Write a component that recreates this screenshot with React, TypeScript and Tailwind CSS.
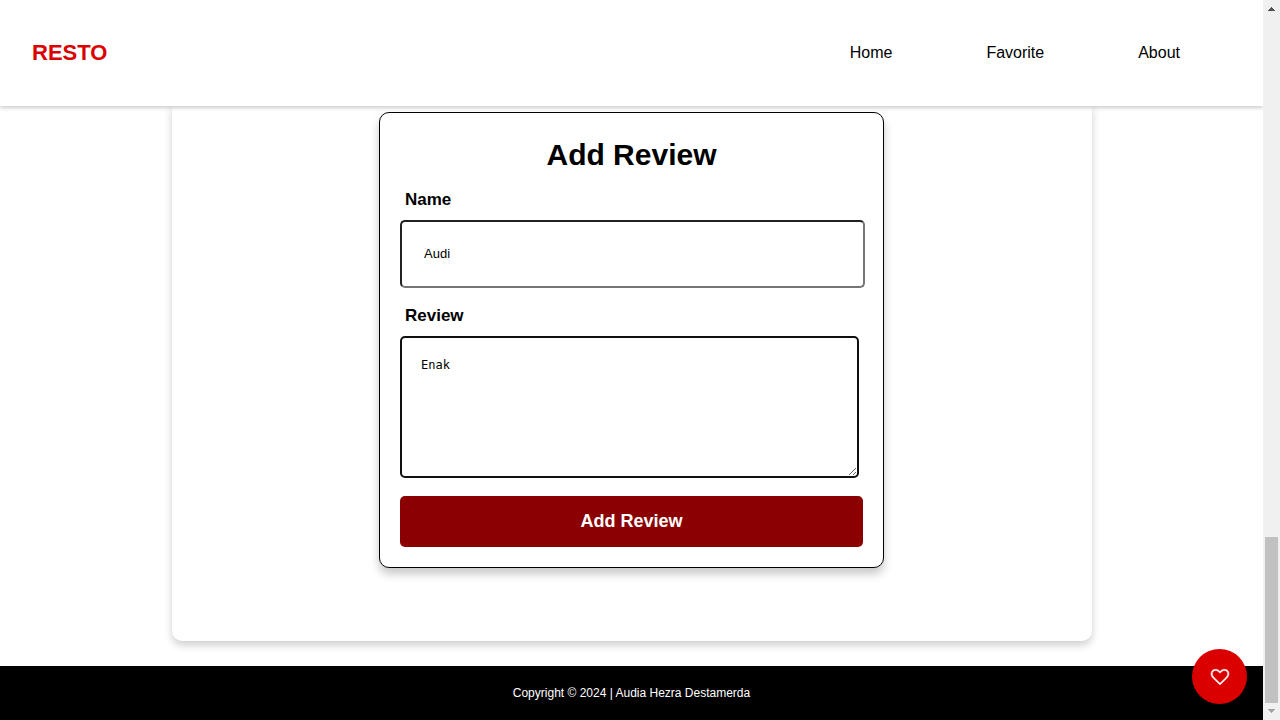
import { useState } from "react";

const links = ["Home", "Favorite", "About"];

function Header() {
  return (
    <header className="relative z-10 flex h-[106px] shrink-0 items-center justify-between bg-white pr-[83px] pl-8 shadow-[0_2px_4px_rgba(0,0,0,0.2)]">
      <h1 className="text-[22px] leading-8 font-bold text-[#db0000]">RESTO</h1>
      <nav>
        <ul className="flex gap-[94px]">
          {links.map((label) => (
            <li key={label}>
              <a href="#" className="text-base leading-6 text-black">
                {label}
              </a>
            </li>
          ))}
        </ul>
      </nav>
    </header>
  );
}

function ReviewForm() {
  const [name, setName] = useState("Audi");
  const [review, setReview] = useState("Enak");
  return (
    <form
      onSubmit={(e) => e.preventDefault()}
      className="flex w-full max-w-[505px] flex-col rounded-[10px] border border-black bg-white p-5 shadow-[0_6px_10px_rgba(0,0,0,0.22)]"
    >
      <h2 className="text-center text-[30px] leading-[44px] font-bold">Add Review</h2>
      <label htmlFor="name" className="mt-[11px] pl-[5px] text-[17px] leading-6 font-bold">
        Name
      </label>
      <input
        id="name"
        type="text"
        value={name}
        onChange={(e) => setName(e.target.value)}
        className="mt-2 -mr-0.5 h-[68px] rounded-[5px] border-2 border-t-[#212121] border-r-[#767676] border-b-[#767676] border-l-[#212121] bg-white px-[22px] pb-0.5 text-[13px] text-black outline-none"
      />
      <label htmlFor="review" className="mt-4 pl-[5px] text-[17px] leading-6 font-bold">
        Review
      </label>
      <textarea
        id="review"
        value={review}
        onChange={(e) => setReview(e.target.value)}
        className="mt-2 mr-1 h-[142px] resize rounded-[5px] border-2 border-[#101010] bg-white px-[19px] py-[19px] font-['DejaVu_Sans_Mono',monospace] text-xs leading-4 text-black outline-none"
      />
      <button
        type="submit"
        className="mt-[18px] h-[51px] rounded-[5px] bg-[#8b0000] text-[18px] font-bold text-white"
      >
        Add Review
      </button>
    </form>
  );
}

function ScrollTrack() {
  return (
    <div
      aria-hidden="true"
      className="relative z-20 flex w-[17px] shrink-0 flex-col items-center bg-[#f0f0f0]"
    >
      <svg viewBox="0 0 17 17" className="size-[17px]" shapeRendering="crispEdges">
        <path d="M8 7h1v1h1v1h1v1h1v1H5v-1h1V9h1V8h1z" fill="#505050" />
      </svg>
      <div className="grow" />
      <div className="h-[166px] w-[13px] bg-[#c1c1c1]" />
      <svg viewBox="0 0 17 17" className="size-[17px]" shapeRendering="crispEdges">
        <path d="M5 6h7v1h-1v1h-1v1H9v1H8V9H7V8H6V7H5z" fill="#a3a3a3" />
      </svg>
    </div>
  );
}

export default function App() {
  return (
    <div className="flex min-h-screen bg-white font-['Liberation_Sans',Arial,sans-serif] text-black">
      <div className="relative flex min-w-0 grow flex-col">
        <Header />
        <main className="flex grow justify-center pb-[25px]">
          <section className="flex w-full max-w-[920px] items-start justify-center rounded-b-[10px] bg-white pt-1.5 pb-[73px] shadow-[0_4px_8px_rgba(0,0,0,0.2)]">
            <ReviewForm />
          </section>
        </main>
        <footer className="flex h-[54px] shrink-0 items-center justify-center bg-black text-xs text-white">
          <p>Copyright © 2024 | Audia Hezra Destamerda</p>
        </footer>
        <button
          type="button"
          aria-label="like this restaurant"
          className="absolute right-4 bottom-4 flex size-[55px] items-center justify-center rounded-full bg-[#db0000] text-white"
        >
          <svg
            viewBox="0 0 1792 1792"
            className="size-[18px] overflow-visible"
            fill="currentColor"
            stroke="currentColor"
            strokeWidth="50"
          >
            <path d="M1664 596q0-81-21.500-143t-55-98.500-81.500-59.500-94-31-98-8-112 25.500-110.500 64-86.500 72-60 61.500q-18 22-49 22t-49-22q-24-28-60-61.500t-86.500-72-110.500-64-112-25.500-98 8-94 31-81.500 59.500-55 98.500-21.500 143q0 168 187 355l581 560 580-559q188-188 188-356zm128 0q0 221-229 450l-623 600q-18 18-44 18t-44-18l-624-602q-10-8-27.500-26T145 952.500 77 855 23.500 734 0 596q0-220 127-344t351-124q62 0 126.500 21.500t120 58T820 276t76 68q36-36 76-68t95.500-68.500 120-58T1314 128q224 0 351 124t127 344z" />
          </svg>
        </button>
      </div>
      <ScrollTrack />
    </div>
  );
}
